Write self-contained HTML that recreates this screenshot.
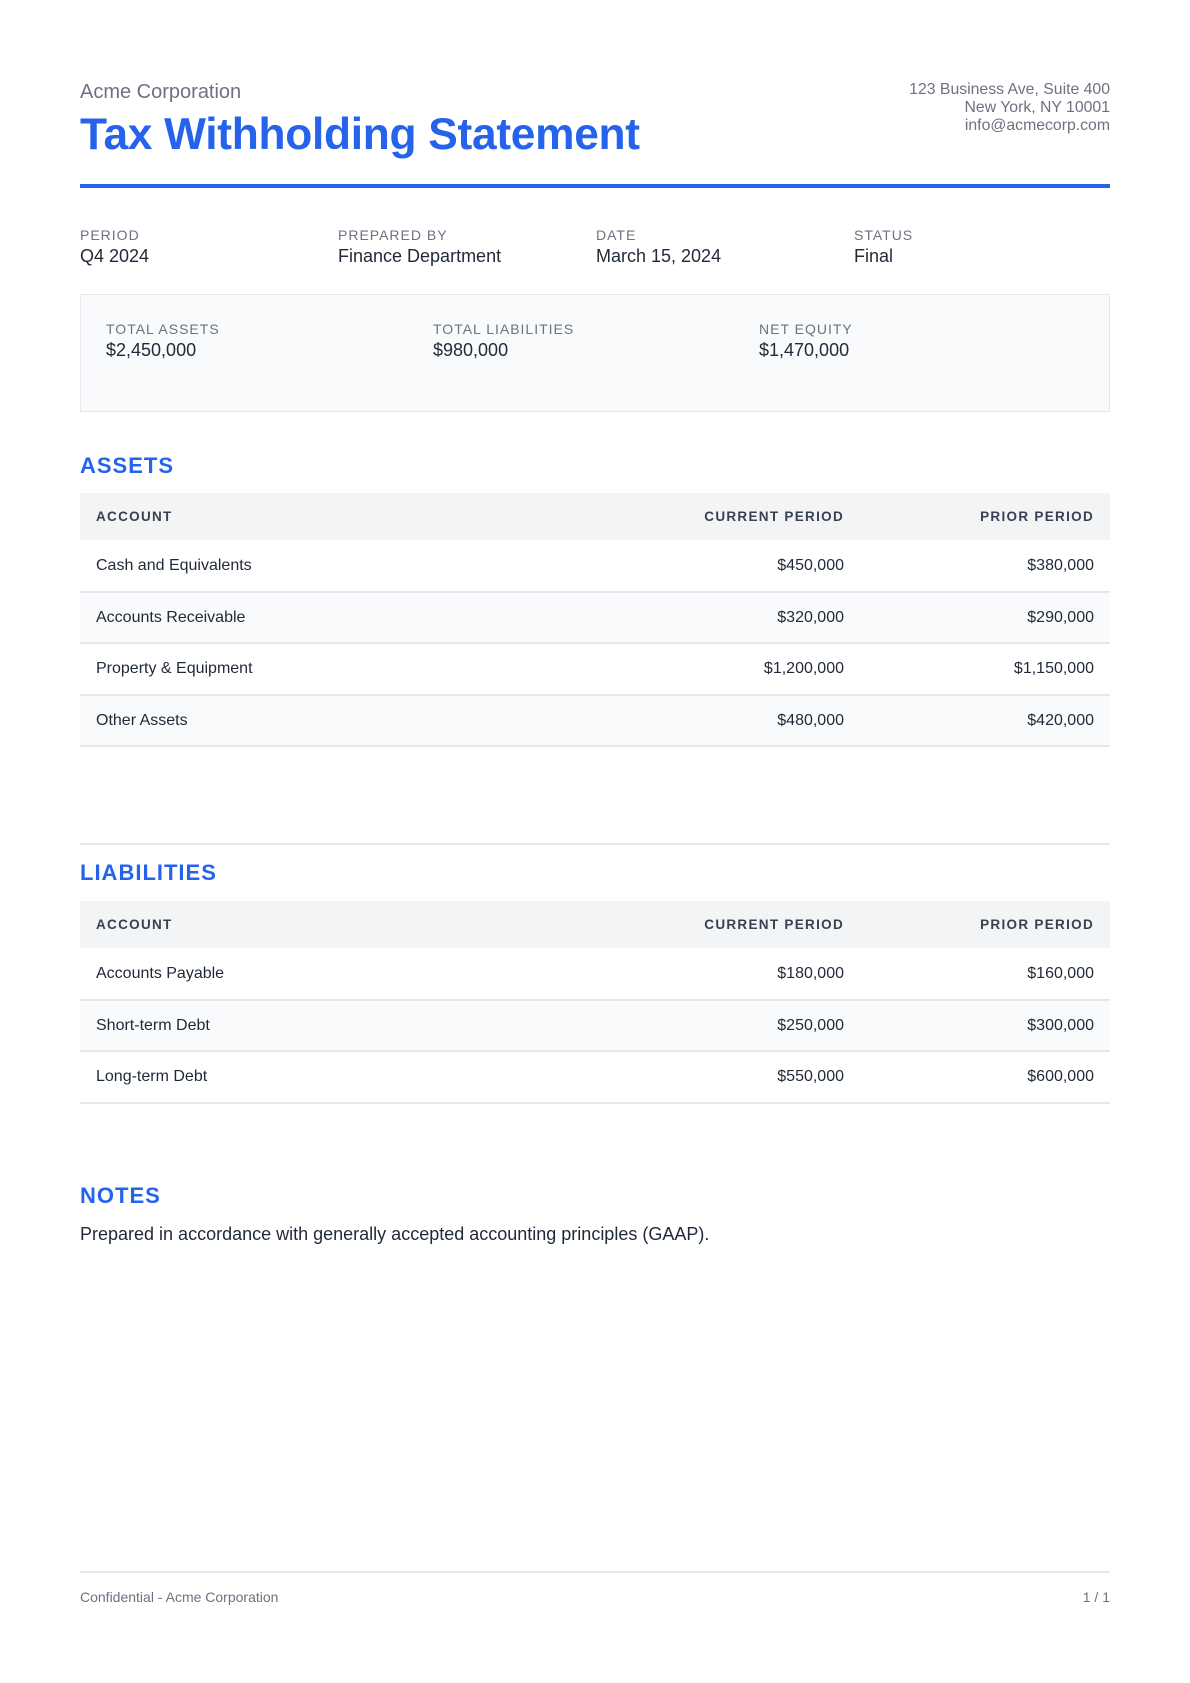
<!DOCTYPE html>
<html><head><meta charset="utf-8"><style>
*{margin:0;padding:0;box-sizing:border-box}
body{width:1190px;height:1683px;background:#fff;font-family:"Liberation Sans",sans-serif;color:#1f2937;position:relative;overflow:hidden}
.a{position:absolute}
.lbl{font-size:14px;letter-spacing:1px;color:#6b7280;text-transform:uppercase}
.val{font-size:18px;color:#1f2937}
h2{position:absolute;left:80px;font-size:22px;font-weight:bold;color:#2563eb;letter-spacing:1px}
table{position:absolute;left:80px;width:1030px;border-collapse:collapse}
th{background:#f3f4f6;height:47px;font-size:13.5px;letter-spacing:1.3px;color:#374151;font-weight:bold;text-align:left;padding:0 16px}
td{height:51.5px;border-bottom:2px solid #e5e7eb;font-size:16px;padding:1px 16px 0;color:#1f2937}
tr:nth-child(odd) td{background:#f9fafb}
.r{text-align:right}
</style></head><body>
<div class="a" style="left:80px;top:81px;font-size:20px;color:#6b7280">Acme Corporation</div>
<div class="a" style="left:80px;top:110px;font-size:44.3px;font-weight:bold;color:#2563eb;letter-spacing:-0.3px">Tax Withholding Statement</div>
<div class="a" style="right:80px;top:81px;font-size:15.8px;color:#6b7280;text-align:right;line-height:18px">123 Business Ave, Suite 400<br>New York, NY 10001<br>info@acmecorp.com</div>
<div class="a" style="left:80px;top:184px;width:1030px;height:4px;background:#2563eb"></div>

<div class="a lbl" style="left:80px;top:227px">Period</div><div class="a val" style="left:80px;top:246px">Q4 2024</div>
<div class="a lbl" style="left:338px;top:227px">Prepared By</div><div class="a val" style="left:338px;top:246px">Finance Department</div>
<div class="a lbl" style="left:596px;top:227px">Date</div><div class="a val" style="left:596px;top:246px">March 15, 2024</div>
<div class="a lbl" style="left:854px;top:227px">Status</div><div class="a val" style="left:854px;top:246px">Final</div>

<div class="a" style="left:80px;top:294px;width:1030px;height:118px;background:#f9fafb;border:1.5px solid #e5e7eb"></div>
<div class="a lbl" style="left:106px;top:321px">Total Assets</div><div class="a val" style="left:106px;top:340px">$2,450,000</div>
<div class="a lbl" style="left:433px;top:321px">Total Liabilities</div><div class="a val" style="left:433px;top:340px">$980,000</div>
<div class="a lbl" style="left:759px;top:321px">Net Equity</div><div class="a val" style="left:759px;top:340px">$1,470,000</div>

<h2 style="top:453px">ASSETS</h2>
<table style="top:493px">
<tr><th>ACCOUNT</th><th class="r" style="width:300px">CURRENT PERIOD</th><th class="r" style="width:250px">PRIOR PERIOD</th></tr>
<tr><td>Cash and Equivalents</td><td class="r">$450,000</td><td class="r">$380,000</td></tr>
<tr><td>Accounts Receivable</td><td class="r">$320,000</td><td class="r">$290,000</td></tr>
<tr><td>Property &amp; Equipment</td><td class="r">$1,200,000</td><td class="r">$1,150,000</td></tr>
<tr><td>Other Assets</td><td class="r">$480,000</td><td class="r">$420,000</td></tr>
</table>

<div class="a" style="left:80px;top:843px;width:1030px;height:2px;background:#e5e7eb"></div>
<h2 style="top:860px">LIABILITIES</h2>
<table style="top:901px">
<tr><th>ACCOUNT</th><th class="r" style="width:300px">CURRENT PERIOD</th><th class="r" style="width:250px">PRIOR PERIOD</th></tr>
<tr><td>Accounts Payable</td><td class="r">$180,000</td><td class="r">$160,000</td></tr>
<tr><td>Short-term Debt</td><td class="r">$250,000</td><td class="r">$300,000</td></tr>
<tr><td>Long-term Debt</td><td class="r">$550,000</td><td class="r">$600,000</td></tr>
</table>

<h2 style="top:1183px">NOTES</h2>
<div class="a" style="left:80px;top:1224px;font-size:18px;color:#1f2937">Prepared in accordance with generally accepted accounting principles (GAAP).</div>

<div class="a" style="left:80px;top:1571px;width:1030px;height:2px;background:#e5e7eb"></div>
<div class="a" style="left:80px;top:1589px;font-size:14px;color:#6b7280">Confidential - Acme Corporation</div>
<div class="a" style="right:80px;top:1589px;font-size:14px;color:#6b7280">1 / 1</div>
</body></html>
